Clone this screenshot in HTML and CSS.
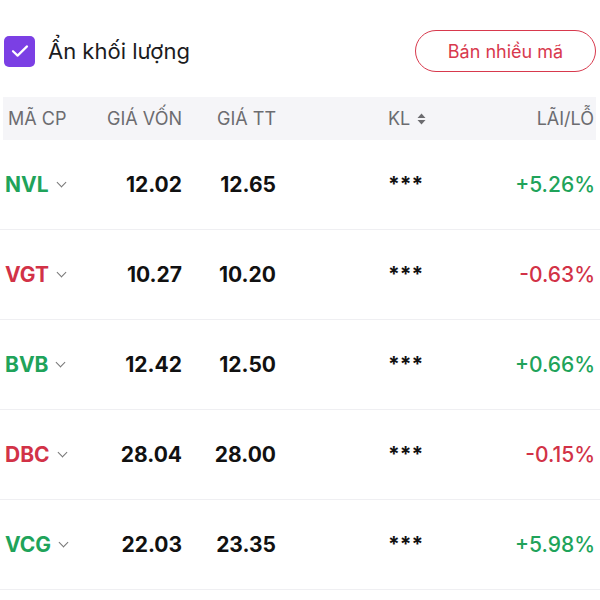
FILE: index.html
```html
<!DOCTYPE html>
<html>
    <head>
        <title>Danh mục</title>
        <meta charset="utf-8">
        <link rel="stylesheet" href="styles.css">
    </head>
    <body>
        <div class="toolbar">
            <label class="hide-vol">
                <span class="check">
                    <svg width="18" height="14" viewBox="0 0 18 14"><path d="M2 7.2l4.6 4.4L16 2.4" fill="none" stroke="#fff" stroke-width="2.2" stroke-linecap="round" stroke-linejoin="round"/></svg>
                </span>
                Ẩn khối lượng
            </label>
            <button class="sell-btn">Bán nhiều mã</button>
        </div>

        <div class="table">
            <div class="row head">
                <div class="c-sym">MÃ CP</div>
                <div class="c-num">GIÁ VỐN</div>
                <div class="c-num">GIÁ TT</div>
                <div class="c-vol">KL
                    <svg class="sort" width="9" height="12" viewBox="0 0 9 12"><path d="M4.5 0.5L8.5 5H0.5z M4.5 11.5L8.5 7H0.5z" fill="#6c6c70"/></svg>
                </div>
                <div class="c-pl">LÃI/LỖ</div>
            </div>

            <div class="row">
                <div class="c-sym up">NVL <span class="chev"></span></div>
                <div class="c-num">12.02</div>
                <div class="c-num">12.65</div>
                <div class="c-vol">***</div>
                <div class="c-pl up">+5.26%</div>
            </div>
            <div class="row">
                <div class="c-sym down">VGT <span class="chev"></span></div>
                <div class="c-num">10.27</div>
                <div class="c-num">10.20</div>
                <div class="c-vol">***</div>
                <div class="c-pl down">-0.63%</div>
            </div>
            <div class="row">
                <div class="c-sym up">BVB <span class="chev"></span></div>
                <div class="c-num">12.42</div>
                <div class="c-num">12.50</div>
                <div class="c-vol">***</div>
                <div class="c-pl up">+0.66%</div>
            </div>
            <div class="row">
                <div class="c-sym down">DBC <span class="chev"></span></div>
                <div class="c-num">28.04</div>
                <div class="c-num">28.00</div>
                <div class="c-vol">***</div>
                <div class="c-pl down">-0.15%</div>
            </div>
            <div class="row">
                <div class="c-sym up">VCG <span class="chev"></span></div>
                <div class="c-num">22.03</div>
                <div class="c-num">23.35</div>
                <div class="c-vol">***</div>
                <div class="c-pl up">+5.98%</div>
            </div>
        </div>
    </body>
</html>
```

FILE: styles.css
```css
body{
    margin: 0;
    background-color: #ffffff;
    font-family: Inter, "Noto Sans", sans-serif;
    color: #111111;
}
.toolbar{
    display: flex;
    align-items: center;
    justify-content: space-between;
    padding: 30px 4px 0 4px;
    height: 42px;
}
.hide-vol{
    display: flex;
    align-items: center;
    gap: 13px;
    font-size: 22px;
    color: #1c1c1e;
}
.check{
    width: 31px;
    height: 31px;
    border-radius: 5px;
    background-color: #7b3fe4;
    display: flex;
    align-items: center;
    justify-content: center;
}
.sell-btn{
    width: 181px;
    height: 42px;
    border: solid #d8394d 1.5px;
    border-radius: 21px;
    background-color: #ffffff;
    color: #d8394d;
    font-family: Inter, "Noto Sans", sans-serif;
    font-size: 18px;
}
.table{
    margin-top: 25px;
}
.row{
    display: grid;
    grid-template-columns: 95px 82px 94px 1fr 120px;
    align-items: center;
    height: 89px;
    border-bottom: solid #efeff2 1px;
    font-size: 21px;
    font-weight: 700;
    padding: 0 5px;
}
.row.head{
    height: 43px;
    margin: 0 4px 0 3px;
    padding: 0 2px;
    border-bottom: none;
    background-color: #f5f5f8;
    color: #6c6c70;
    font-size: 18px;
    font-weight: 400;
}
.head .c-sym{
    padding-left: 3px;
}
.c-sym{
    display: flex;
    align-items: center;
}
.c-num{
    text-align: right;
    white-space: nowrap;
}
.c-vol{
    padding-left: 112px;
    display: flex;
    align-items: center;
    gap: 7px;
}
.c-pl{
    text-align: right;
    white-space: nowrap;
}
.row .c-pl{
    font-weight: 500;
}
.head .c-pl{
    font-weight: 400;
}
.up{
    color: #20a35a;
}
.down{
    color: #d23247;
}
.chev{
    width: 6px;
    height: 6px;
    border-right: solid #777777 1.3px;
    border-bottom: solid #777777 1.3px;
    transform: rotate(45deg);
    margin-left: 9px;
    margin-top: -5px;
}
```
